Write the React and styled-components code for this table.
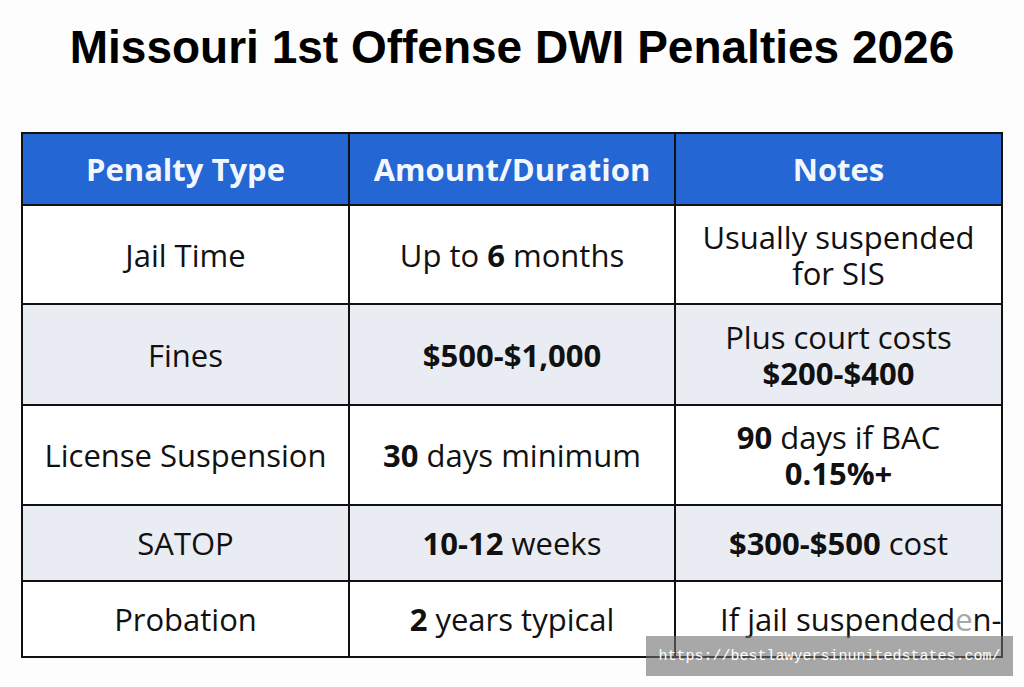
import React from "react";
import styled, { createGlobalStyle } from "styled-components";

const GlobalStyle = createGlobalStyle`
  html, body {
    margin: 0;
    padding: 0;
    background: #fdfdfd;
  }
  #root {
    width: 1024px;
    height: 687px;
    overflow: hidden;
  }
`;

const Page = styled.div`
  position: relative;
  width: 1024px;
  height: 687px;
  box-sizing: border-box;
  padding: 0 21px;
  display: flex;
  flex-direction: column;
  align-items: stretch;
`;

const Title = styled.h1`
  margin: 20px 0 0;
  height: 112px;
  font-family: "Liberation Sans", Arial, sans-serif;
  font-weight: 700;
  font-size: 46px;
  line-height: 54px;
  color: #000;
  text-align: center;
`;

const Table = styled.div`
  display: grid;
  grid-template-columns: 325px 324px 325px;
  grid-template-rows: 70px 97px 99px 98px 74px 74px;
  gap: 2px;
  background: #111;
  border: 2px solid #111;
  width: 982px;
  box-sizing: border-box;
`;

const HeadCell = styled.div`
  background: #2466d4;
  color: #f2f7ff;
  font-family: "Open Sans", "Noto Sans", sans-serif;
  font-weight: 700;
  font-size: 31px;
  display: flex;
  align-items: center;
  justify-content: center;
  text-align: center;
`;

const Cell = styled.div`
  background: ${({ $shade }) => ($shade ? "#e9ecf3" : "#ffffff")};
  color: #111;
  font-family: "Open Sans", "Noto Sans", sans-serif;
  font-size: 31px;
  line-height: 36px;
  display: flex;
  align-items: center;
  justify-content: ${({ $left }) => ($left ? "flex-start" : "center")};
  text-align: center;
  padding: ${({ $left }) => ($left ? "0 0 0 44px" : "0 6px")};
  overflow: hidden;
  white-space: ${({ $left }) => ($left ? "nowrap" : "normal")};
  b {
    font-weight: 700;
  }
`;

const Faded = styled.span`
  color: #a8a8a8;
`;

const Watermark = styled.div`
  position: absolute;
  left: 646px;
  top: 636px;
  width: 367px;
  height: 40px;
  background: rgba(110, 110, 110, 0.6);
  color: #ffffff;
  font-family: "Liberation Mono", "DejaVu Sans Mono", monospace;
  font-size: 15px;
  display: flex;
  align-items: center;
  justify-content: center;
`;

const rows = [
  {
    type: "Jail Time",
    amount: (
      <>
        Up to <b>6</b> months
      </>
    ),
    notes: (
      <>
        Usually suspended
        <br />
        for SIS
      </>
    ),
  },
  {
    type: "Fines",
    amount: <b>$500-$1,000</b>,
    notes: (
      <>
        Plus court costs
        <br />
        <b>$200-$400</b>
      </>
    ),
  },
  {
    type: "License Suspension",
    amount: (
      <>
        <b>30</b> days minimum
      </>
    ),
    notes: (
      <>
        <b>90</b> days if BAC
        <br />
        <b>0.15%+</b>
      </>
    ),
  },
  {
    type: "SATOP",
    amount: (
      <>
        <b>10-12</b> weeks
      </>
    ),
    notes: (
      <>
        <b>$300-$500</b> cost
      </>
    ),
  },
  {
    type: "Probation",
    amount: (
      <>
        <b>2</b> years typical
      </>
    ),
    notes: (
      <>
        If jail suspended<Faded>e</Faded>n-
      </>
    ),
    left: true,
  },
];

const App = () => {
  return (
    <Page>
      <GlobalStyle />
      <Title>Missouri 1st Offense DWI Penalties 2026</Title>
      <Table>
        <HeadCell>Penalty Type</HeadCell>
        <HeadCell>Amount/Duration</HeadCell>
        <HeadCell>Notes</HeadCell>
        {rows.map((row, i) => (
          <React.Fragment key={row.type}>
            <Cell $shade={i % 2 === 1}>
              <span>{row.type}</span>
            </Cell>
            <Cell $shade={i % 2 === 1}>
              <span>{row.amount}</span>
            </Cell>
            <Cell $shade={i % 2 === 1} $left={row.left}>
              <span>{row.notes}</span>
            </Cell>
          </React.Fragment>
        ))}
      </Table>
      <Watermark>https://bestlawyersinunitedstates.com/</Watermark>
    </Page>
  );
};

export default App;
